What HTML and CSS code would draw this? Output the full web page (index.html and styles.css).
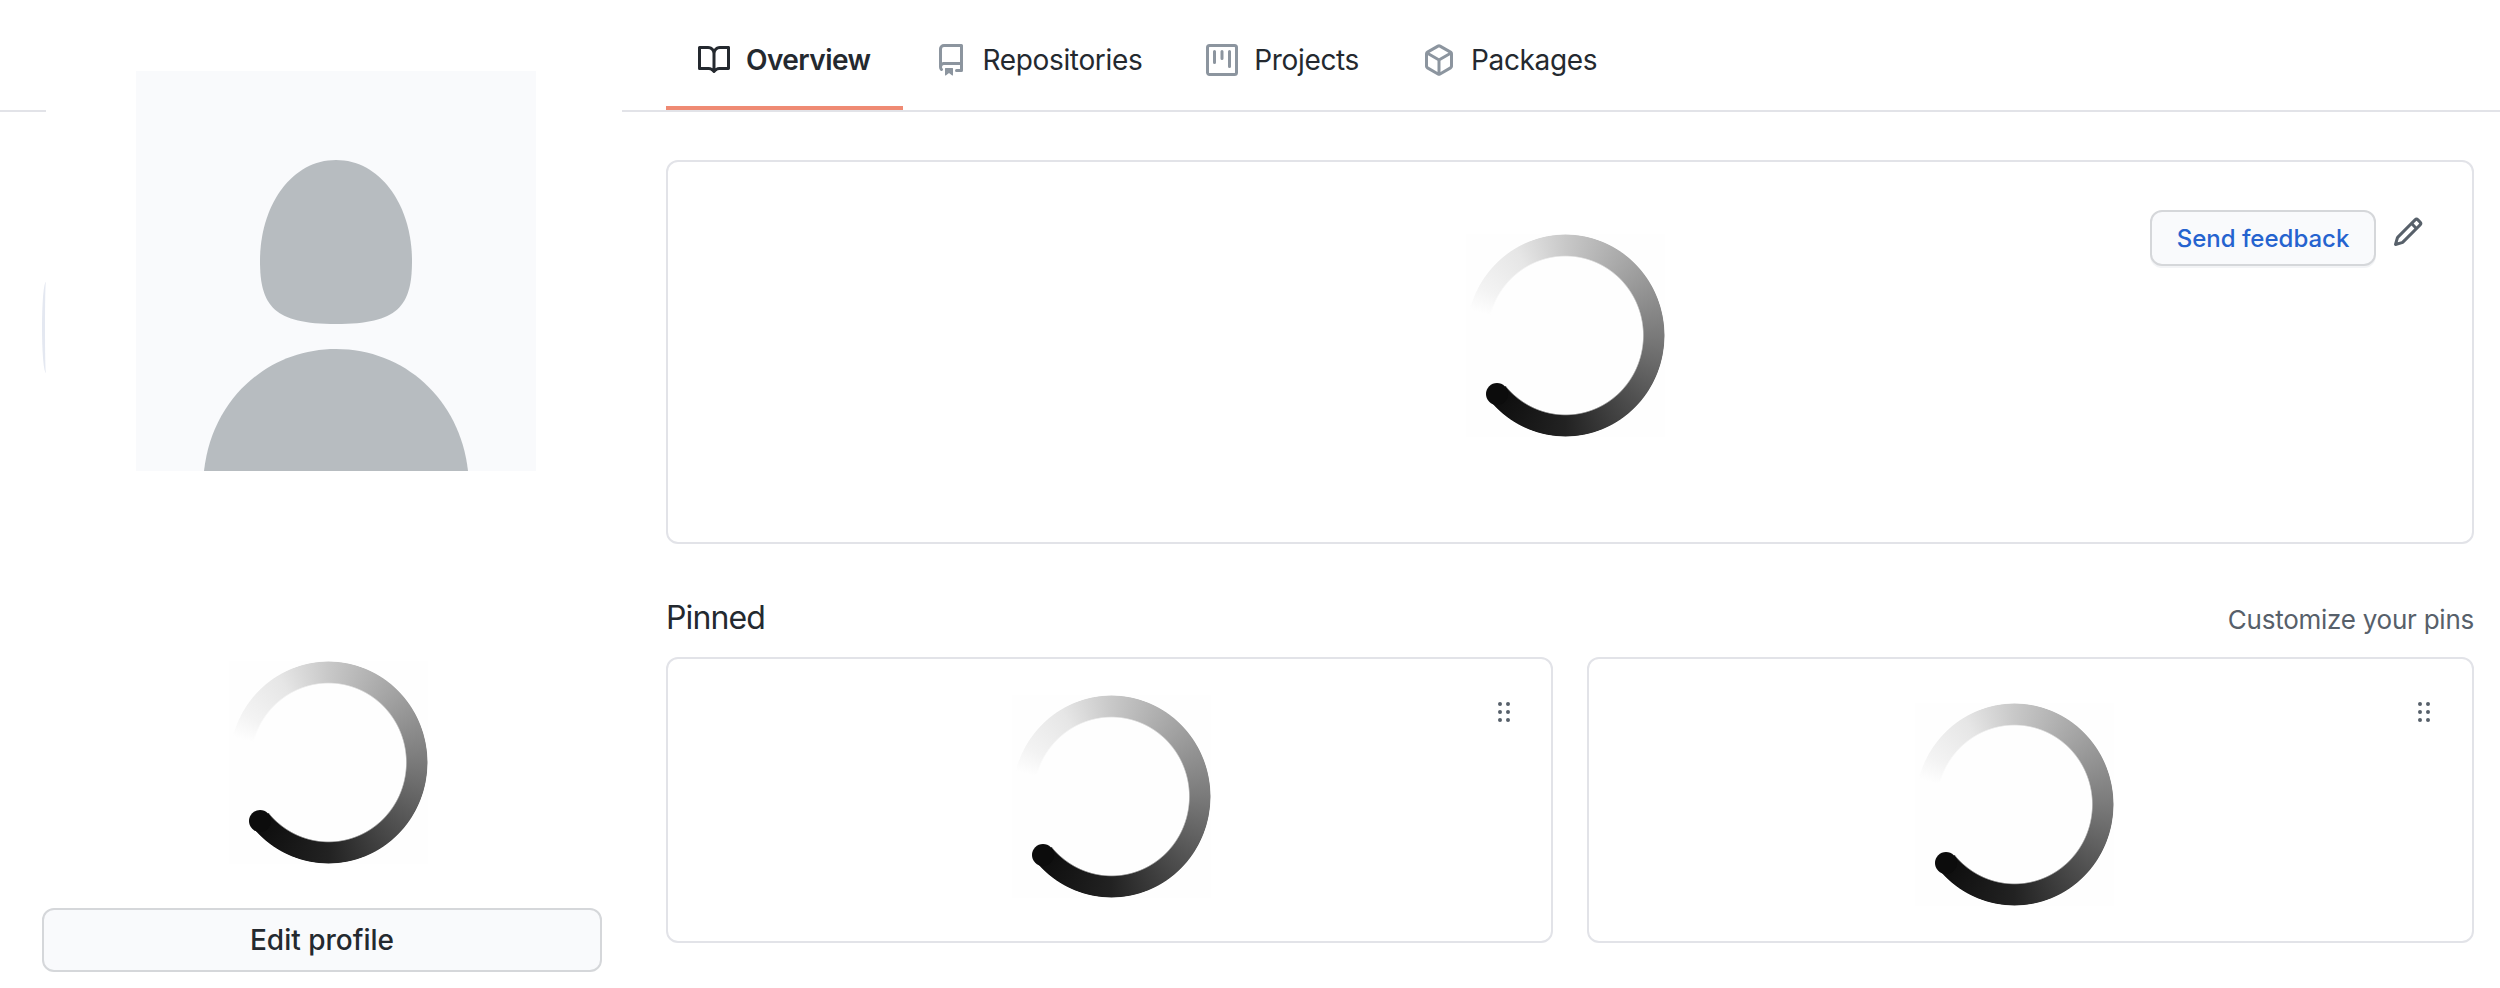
FILE: index.html
```html
<!DOCTYPE html>
<html lang="en">
<head>
    <meta charset="UTF-8">
    <meta name="viewport" content="width=device-width, initial-scale=1.0">
    <title>Profile</title>
    <link rel="stylesheet" href="styles.css">
</head>
<body>
    <nav class="tabbar">
        <a class="tab tab-active" href="#">
            <svg class="tab-icon" viewBox="0 0 16 16"><path fill-rule="evenodd" d="M0 1.75A.75.75 0 01.75 1h4.253c1.227 0 2.317.59 3 1.501A3.744 3.744 0 0111.006 1h4.245a.75.75 0 01.75.75v10.5a.75.75 0 01-.75.75h-4.507a2.25 2.25 0 00-1.591.659l-.622.621a.75.75 0 01-1.06 0l-.622-.621A2.25 2.25 0 005.258 13H.75a.75.75 0 01-.75-.75V1.75zm8.755 3a2.25 2.25 0 012.25-2.25H14.5v9h-3.757c-.71 0-1.4.201-1.992.572l.004-7.322zm-1.504 7.324l.004-5.073-.002-2.253A2.25 2.25 0 005.003 2.5H1.5v9h3.757a3.75 3.75 0 011.994.574z"/></svg>
            Overview
        </a>
        <a class="tab" href="#">
            <svg class="tab-icon" viewBox="0 0 16 16"><path fill-rule="evenodd" d="M2 2.5A2.5 2.5 0 014.5 0h8.75a.75.75 0 01.75.75v12.5a.75.75 0 01-.75.75h-2.5a.75.75 0 110-1.5h1.75v-2h-8a1 1 0 00-.714 1.7.75.75 0 01-1.072 1.05A2.495 2.495 0 012 11.5v-9zm10.5-1V9h-8c-.356 0-.694.074-1 .208V2.5a1 1 0 011-1h8zM5 12.25v3.25a.25.25 0 00.4.2l1.45-1.087a.25.25 0 01.3 0L8.6 15.7a.25.25 0 00.4-.2v-3.25a.25.25 0 00-.25-.25h-3.5a.25.25 0 00-.25.25z"/></svg>
            Repositories
        </a>
        <a class="tab" href="#">
            <svg class="tab-icon" viewBox="0 0 16 16"><path fill-rule="evenodd" d="M1.75 0A1.75 1.75 0 000 1.75v12.5C0 15.216.784 16 1.75 16h12.5A1.75 1.75 0 0016 14.25V1.75A1.75 1.75 0 0014.25 0H1.75zM1.5 1.75a.25.25 0 01.25-.25h12.5a.25.25 0 01.25.25v12.5a.25.25 0 01-.25.25H1.75a.25.25 0 01-.25-.25V1.75zM11.75 3a.75.75 0 00-.75.75v7.5a.75.75 0 001.5 0v-7.5a.75.75 0 00-.75-.75zm-8.25.75a.75.75 0 011.5 0v5.5a.75.75 0 01-1.5 0v-5.5zM8 3a.75.75 0 00-.75.75v3.5a.75.75 0 001.5 0v-3.5A.75.75 0 008 3z"/></svg>
            Projects
        </a>
        <a class="tab" href="#">
            <svg class="tab-icon" viewBox="0 0 16 16"><path fill-rule="evenodd" d="M8.878.392a1.75 1.75 0 00-1.756 0l-5.25 3.045A1.75 1.75 0 001 4.951v6.098c0 .624.332 1.2.872 1.514l5.25 3.045a1.75 1.75 0 001.756 0l5.25-3.045c.54-.313.872-.89.872-1.514V4.951c0-.624-.332-1.2-.872-1.514L8.878.392zM7.875 1.69a.25.25 0 01.25 0l4.63 2.685L8 7.133 3.245 4.375l4.63-2.685zM2.5 5.677v5.372c0 .09.047.171.125.216l4.625 2.683V8.432L2.5 5.677zm6.25 8.271l4.625-2.683a.25.25 0 00.125-.216V5.677L8.75 8.432v5.516z"/></svg>
            Packages
        </a>
    </nav>

    <div class="layout">
        <aside class="sidebar">
            <div class="avatar-frame">
                <svg class="avatar" viewBox="0 0 400 400">
                    <rect width="400" height="400" fill="#f9fafc"/>
                    <path fill="#b7bcc0" d="M200 89C245 89 276 135 276 190C276 235 262 253 200 253C138 253 124 235 124 190C124 135 155 89 200 89Z"/>
                    <path fill="#b7bcc0" d="M68 400C76 328 132 278 200 278C268 278 324 328 332 400Z"/>
                </svg>
            </div>
            <div class="spinner spinner-side"></div>
            <button class="edit-btn">Edit profile</button>
        </aside>

        <main class="main">
            <section class="hero">
                <div class="spinner spinner-hero"></div>
                <div class="hero-actions">
                    <button class="feedback-btn">Send feedback</button>
                    <svg class="pencil" viewBox="0 0 16 16"><path fill-rule="evenodd" d="M11.013 1.427a1.75 1.75 0 012.474 0l1.086 1.086a1.75 1.75 0 010 2.474l-8.61 8.61c-.21.21-.47.364-.756.445l-3.251.93a.75.75 0 01-.927-.928l.929-3.25a1.75 1.75 0 01.445-.758l8.61-8.61zm1.414 1.06a.25.25 0 00-.354 0L10.811 3.75l1.439 1.44 1.263-1.263a.25.25 0 000-.354l-1.086-1.086zM11.189 6.25L9.75 4.81l-6.286 6.287a.25.25 0 00-.064.108l-.558 1.953 1.953-.558a.249.249 0 00.108-.064l6.286-6.286z"/></svg>
                </div>
            </section>

            <div class="pinned-head">
                <h2 class="pinned-title">Pinned</h2>
                <a class="pinned-link" href="#">Customize your pins</a>
            </div>

            <div class="pinned-grid">
                <div class="pin-card">
                    <div class="spinner spinner-pin-a"></div>
                    <svg class="grabber" viewBox="0 0 16 16"><path d="M10 13a1 1 0 1 0 0-2 1 1 0 0 0 0 2Zm-4 0a1 1 0 1 0 0-2 1 1 0 0 0 0 2Zm1-5a1 1 0 1 1-2 0 1 1 0 0 1 2 0Zm3 1a1 1 0 1 0 0-2 1 1 0 0 0 0 2Zm1-5a1 1 0 1 1-2 0 1 1 0 0 1 2 0ZM6 5a1 1 0 1 0 0-2 1 1 0 0 0 0 2Z"/></svg>
                </div>
                <div class="pin-card">
                    <div class="spinner spinner-pin-b"></div>
                    <svg class="grabber grabber-last" viewBox="0 0 16 16"><path d="M10 13a1 1 0 1 0 0-2 1 1 0 0 0 0 2Zm-4 0a1 1 0 1 0 0-2 1 1 0 0 0 0 2Zm1-5a1 1 0 1 1-2 0 1 1 0 0 1 2 0Zm3 1a1 1 0 1 0 0-2 1 1 0 0 0 0 2Zm1-5a1 1 0 1 1-2 0 1 1 0 0 1 2 0ZM6 5a1 1 0 1 0 0-2 1 1 0 0 0 0 2Z"/></svg>
                </div>
            </div>
        </main>
    </div>
</body>
</html>
```

FILE: styles.css
```css
* {
    box-sizing: border-box;
}

body {
    margin: 0;
    background: #fff;
    color: #24292f;
    font-family: Inter, "Liberation Sans", sans-serif;
}

/* tabs */
.tabbar {
    display: flex;
    height: 112px;
    padding-left: 666px;
    border-bottom: 2px solid #e2e3e8;
}

.tab {
    display: flex;
    align-items: center;
    gap: 16px;
    height: 110px;
    padding: 10px 32px 0;
    color: #24292f;
    font-size: 28px;
    letter-spacing: -0.35px;
    text-decoration: none;
}

.tab-active {
    padding-top: 14px;
    border-bottom: 4px solid #ef8a73;
    font-weight: 600;
    letter-spacing: -0.55px;
}

.tab-icon {
    width: 32px;
    height: 32px;
    fill: #8c959f;
}

.tab-active .tab-icon {
    fill: #24292f;
}

/* page columns */
.layout {
    display: flex;
    align-items: flex-start;
}

.sidebar {
    position: relative;
    width: 560px;
    margin-left: 42px;
    margin-top: -41px;
}

.sidebar::before {
    content: "";
    position: absolute;
    left: 0;
    top: 211px;
    width: 4px;
    height: 91px;
    border-left: 3px solid #e4e8f1;
    border-radius: 4px 0 0 4px / 46px 0 0 46px;
}

.avatar-frame {
    width: 576px;
    margin-left: 4px;
    padding-left: 90px;
    background: #fff;
}

.avatar {
    display: block;
    width: 400px;
    height: 400px;
}

.edit-btn {
    display: block;
    width: 560px;
    height: 64px;
    margin-top: 44px;
    padding: 0;
    background: #f9fafc;
    border: 2px solid #d5d7da;
    border-radius: 12px;
    color: #24292f;
    font-family: inherit;
    font-size: 28px;
    font-weight: 500;
}

.main {
    width: 1808px;
    margin-left: 64px;
}

/* loading spinner, the arc is a masked conic gradient */
.spinner {
    position: relative;
    flex: none;
    width: 199px;
    height: 203px;
    background: #fefefe;
}

.spinner::before {
    content: "";
    position: absolute;
    inset: 0;
    border-radius: 50%;
    background: conic-gradient(from 285deg, #fefefe 0deg, #f3f3f3 15deg, #e6e6e6 45deg, #c8c8c8 75deg, #7a7a7a 165deg, #222 255deg, #0c0c0c 305deg, transparent 305deg);
    -webkit-mask: radial-gradient(ellipse farthest-side, transparent 77.5%, #000 79%, #000 99%, transparent 100%);
    mask: radial-gradient(ellipse farthest-side, transparent 77.5%, #000 79%, #000 99%, transparent 100%);
}

.spinner::after {
    content: "";
    position: absolute;
    left: 20px;
    top: 149px;
    width: 22px;
    height: 22px;
    border-radius: 50%;
    background: #0c0c0c;
}

.spinner-side {
    margin: 190px 0 0 187px;
}

.spinner-hero {
    margin: 72px 0 0 798px;
}

.spinner-pin-a {
    margin: 36px 0 0 344px;
}

.spinner-pin-b {
    margin: 44px 0 0 326px;
}

/* top card */
.hero {
    display: flex;
    align-items: flex-start;
    height: 384px;
    margin-top: 48px;
    border: 2px solid #e2e3e8;
    border-radius: 12px;
}

.hero-actions {
    display: flex;
    align-items: flex-start;
    gap: 16px;
    margin: 48px 48px 0 auto;
}

.feedback-btn {
    width: 226px;
    height: 56px;
    padding: 0;
    background: #f9fafc;
    border: 2px solid #d5d7da;
    border-radius: 12px;
    box-shadow: 0 2px 0 #f3f4f6;
    color: #2563cf;
    font-family: inherit;
    font-size: 24px;
    font-weight: 500;
}

.pencil {
    width: 32px;
    height: 32px;
    margin-top: 6px;
    fill: #57606a;
}

/* pinned */
.pinned-head {
    display: flex;
    justify-content: space-between;
    align-items: baseline;
    margin-top: 52px;
}

.pinned-title {
    margin: 0;
    font-size: 32px;
    font-weight: 400;
    letter-spacing: -0.9px;
    line-height: 44px;
}

.pinned-link {
    color: #57606a;
    font-size: 26px;
    letter-spacing: -0.25px;
    text-decoration: none;
}

.pinned-grid {
    display: grid;
    grid-template-columns: 1fr 1fr;
    gap: 34px;
    margin-top: 17px;
}

.pin-card {
    display: flex;
    align-items: flex-start;
    height: 286px;
    border: 2px solid #e2e3e8;
    border-radius: 12px;
}

.grabber {
    width: 32px;
    height: 32px;
    margin: 37px 31px 0 auto;
    fill: #57606a;
}

.grabber-last {
    margin-right: 32px;
}
```
